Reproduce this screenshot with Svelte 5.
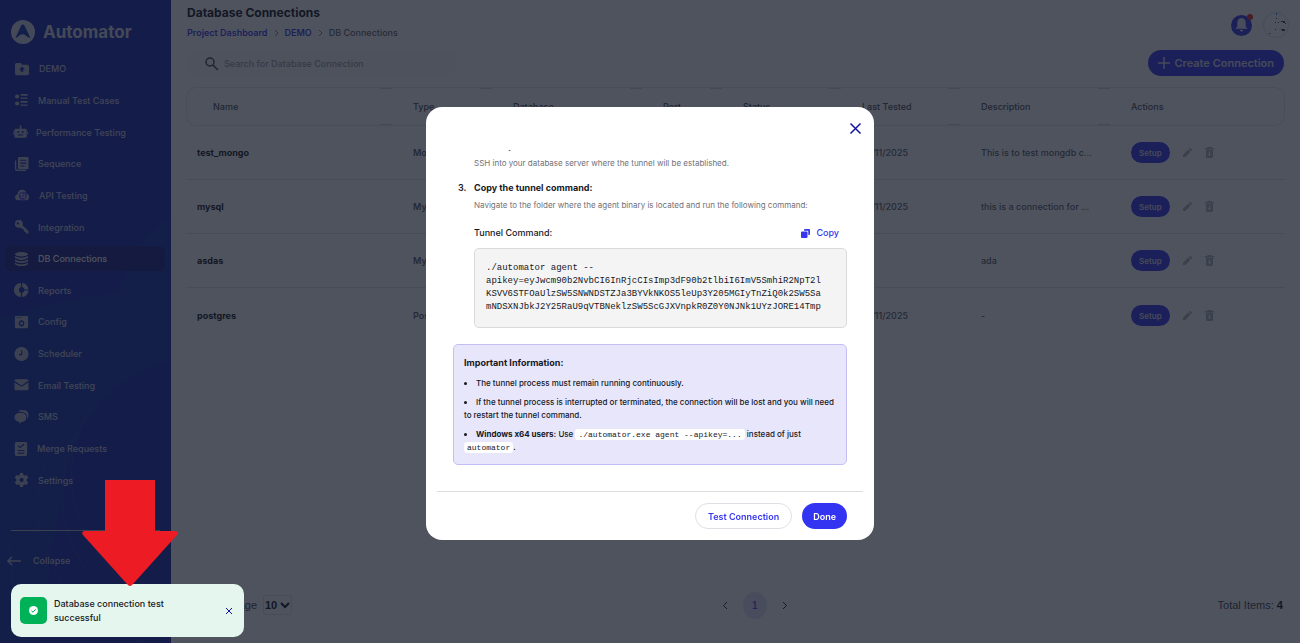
<script lang="ts">
  import { onMount } from "svelte";

  const nav = [
    { label: "DEMO", icon: "folder", w: 16 },
    { label: "Manual Test Cases", icon: "cases", w: 15 },
    { label: "Performance Testing", icon: "robot", w: 13 },
    { label: "Sequence", icon: "sequence", w: 15 },
    { label: "API Testing", icon: "cloud", w: 16 },
    { label: "Integration", icon: "key", w: 15 },
    { label: "DB Connections", icon: "db", w: 15 },
    { label: "Reports", icon: "donut", w: 15 },
    { label: "Config", icon: "config", w: 15 },
    { label: "Scheduler", icon: "clock", w: 15 },
    { label: "Email Testing", icon: "mail", w: 15 },
    { label: "SMS", icon: "chat", w: 15 },
    { label: "Merge Requests", icon: "merge", w: 14 },
    { label: "Settings", icon: "gear", w: 15 },
  ];

  const columns = ["Name", "Type", "Database", "Port", "Status", "Last Tested", "Description", "Actions"];

  const rows = [
    { name: "test_mongo", type: "MongoDB", tested: "18/11/2025", description: "This is to test mongdb c..." },
    { name: "mysql", type: "MySQL", tested: "18/11/2025", description: "this is a connection for ..." },
    { name: "asdas", type: "MySQL", tested: "", description: "ada" },
    { name: "postgres", type: "PostgreSQL", tested: "18/11/2025", description: "-" },
  ];

  const command = [
    "./automator agent --",
    "apikey=eyJwcm90b2NvbCI6InRjcCIsImp3dF90b2tlbiI6ImV5SmhiR2NpT2l",
    "KSVV6STFOaUlzSW5SNWNDSTZJa3BYVkNKOS5leUp3Y205MGIyTnZiQ0k2SW5Sa",
    "mNDSXNJbkJ2Y25RaU9qVTBNeklzSW5ScGJXVnpkR0Z0Y0NJNk1UYzJORE14Tmp",
  ].join("\n");

  let steps: HTMLDivElement;

  onMount(() => {
    steps.scrollTop = steps.scrollHeight;
  });
</script>

{#snippet navIcon(name: string)}
  {#if name === "folder"}
    <path fill-rule="evenodd" d="M2 1h4.500l1.500 2H14q2 0 2 2v8q0 2-2 2H2q-2 0-2-2V3Q0 1 2 1zM8 5 4.700 8.500h1.800V11h3V8.500h1.800z" />
  {:else if name === "cases"}
    <circle cx="3" cy="4" r="2.400" /><circle cx="3" cy="12" r="2.400" />
    <path d="M7 1h8v2H7zM7 5h8v1.500H7zM7 9h8v2H7zM7 13h8v1.500H7z" />
  {:else if name === "robot"}
    <path fill-rule="evenodd" d="M7 0h2v4h5q1.500 0 1.500 1.500v8q0 1.500-1.500 1.500H2q-1.500 0-1.500-1.500v-8Q.5 4 2 4h5zM4 7v2h2.500V7zM9.500 7v2H12V7zM4.500 11v1.200h7V11z" />
    <path d="M-1 7h1v4h-1zM16 7h1v4h-1z" />
  {:else if name === "sequence"}
    <path fill-rule="evenodd" d="M5.500 0h9Q16 0 16 1.500v11q0 1.500-1.500 1.500h-9Q4 14 4 12.500v-11Q4 0 5.500 0zM6.500 3v1.300h7V3zM6.500 6.300v1.300h7V6.300zM6.500 9.600v1.300h5V9.600z" />
    <path d="M.5 4H2v9q0 1.500 1.500 1.500H13V16H3q-2.500 0-2.500-2z" />
  {:else if name === "cloud"}
    <path d="M4 14q-4 0-4-3.500Q0 7.500 3 7q.5-5 5.500-5 4 0 4.500 4.500 3 .5 3 4Q16 14 12.500 14z" />
    <circle cx="9" cy="9" r="4.600" class="badge" />
    <path d="M7.500 6.500v5M5.800 8l1.700-1.700L9 8M10.500 6.500v5M9 10l1.500 1.700 1.700-1.700" class="line" />
  {:else if name === "key"}
    <path fill-rule="evenodd" d="M5 0q4.500 0 4.500 4.500 0 .8-.3 1.700L16 12.500V15.500h-3v-2h-2v-2.200L6.800 8.700Q.5 9.500.5 4.500.5 0 5 0zM3.800 2.500a1.300 1.300 0 1 0 .1 0z" />
  {:else if name === "db"}
    <ellipse cx="8" cy="2.500" rx="7.500" ry="2.500" />
    <path d="M.5 4.500Q3 6.500 8 6.500t7.500-2v2.200Q13 9 8 9T.5 6.700zM.5 8.300q2.500 2.200 7.500 2.200t7.500-2.200v2.200q-2.500 2-7.500 2t-7.500-2zM.5 12q2.500 2.200 7.500 2.200t7.500-2.200v1.700Q13.500 16 8 16T.5 13.700z" />
  {:else if name === "donut"}
    <path d="M7.300 0v4.500a3.800 3.800 0 0 0 0 7V16A8 8 0 0 1 7.300 0zM8.700 0A8 8 0 0 1 16 7.300h-4.500a3.800 3.800 0 0 0-2.800-2.800zM16 8.700A8 8 0 0 1 8.700 16v-4.500a3.800 3.800 0 0 0 2.800-2.800z" />
  {:else if name === "config"}
    <path fill-rule="evenodd" d="M2 1h12q1.500 0 1.500 1.500v11Q15.500 15 14 15H2Q.5 15 .5 13.500v-11Q.5 1 2 1zM2.500 2.300v1.200h1.200V2.300zM4.700 2.300v1.200h1.200V2.300zM6.900 2.300v1.200h1.200V2.300zM8 5.500l1 1h1.500V8l1.200 1.500-1.200 1.500v1.500H9L8 13.500l-1-1H5.500V11L4.300 9.500 5.500 8V6.500H7z" />
    <circle cx="8" cy="9.500" r="1.600" />
  {:else if name === "clock"}
    <path fill-rule="evenodd" d="M8 0a8 8 0 1 1-.1 0zM7.500 4v4H5v1.400h3.900V4z" />
  {:else if name === "mail"}
    <path d="M0 3V2.500Q.5 1.500 1.500 1.500h13q1 0 1.500 1V3L8 8.500z" />
    <path d="M0 5l8 5 8-5v7.500q0 1.500-1.500 1.500h-13Q0 14 0 12.500z" />
  {:else if name === "chat"}
    <path d="M7 3.200q6.500 0 6.500 5.300 0 5-6 5.200L5.500 16v-2.500Q0 12.500 0 8.500 0 3.200 7 3.200z" />
    <path d="M4 1.500Q5.500 0 9 0q7 0 7 6 0 2.500-1.500 4Q15.300 2.500 8 1.900q-2-.1-4-.4z" />
  {:else if name === "merge"}
    <path fill-rule="evenodd" d="M3 0h10q2 0 2 2v12q0 2-2 2H3q-2 0-2-2V2Q1 0 3 0zM5 3.500 4 4.500l2.700 2.700L12 3l-1-1-4.300 3.300zM4 9v1.300h8V9zM4 12v1.300h8V12z" />
  {:else if name === "gear"}
    <path fill-rule="evenodd" d="M6.300 0h3.400l.4 2.200 1.600 1 2.200-.8 1.700 2.900L13.900 7v2l1.700 1.700-1.700 2.900-2.200-.8-1.600 1-.4 2.200H6.300l-.4-2.200-1.600-1-2.200.8L.4 10.700 2.100 9V7L.4 5.300l1.700-2.900 2.200.8 1.600-1zM8 5.500a2.500 2.500 0 1 0 .1 0z" />
  {/if}
{/snippet}

<div class="app">
  <aside class="sidebar">
    <svg class="waves" viewBox="0 0 171 643" preserveAspectRatio="none" aria-hidden="true">
      <path class="wave" d="M0 318Q60 298 120 292 124 250 150 235 155 222 171 220V360Q120 375 90 415 60 460 40 643H0z" />
      <path class="thread" d="M60 428Q20 500 50 560T80 643M78 428Q45 500 80 560T140 643M95 400Q50 470 90 540T171 585M8 540Q18 590 10 643" />
    </svg>

    <div class="brand">
      <svg width="24" height="24" viewBox="0 0 24 24" aria-hidden="true">
        <circle cx="12" cy="12" r="12" fill="#d3d7e8" />
        <path d="M11.800 4.500q1.200 0 1.800 1.200L19.500 18q-3.500-.8-6.500-3.500-2.500-.8-4 .8Q7 17.500 4.500 18L10 5.700q.6-1.200 1.800-1.200z" fill="#1230b8" />
        <path d="M5.500 18q4-3.600 6.500-3.200 2.500.4 5.500 3-3.500-1-5.500-1.300T5.500 18z" fill="#d3d7e8" />
      </svg>
      <span>Automator</span>
    </div>

    <nav>
      {#each nav as item (item.label)}
        <a href="#{item.icon}" class:active={item.icon === "db"}>
          <svg width={item.w} height="14" viewBox="0 0 16 16" aria-hidden="true">{@render navIcon(item.icon)}</svg>
          <span>{item.label}</span>
        </a>
      {/each}
    </nav>

    <div class="side-foot">
      <button class="collapse">
        <svg width="14" height="10" viewBox="0 0 14 10" aria-hidden="true"><path d="M14 5H1M5 1 1 5l4 4" /></svg>
        Collapse
      </button>
    </div>
  </aside>

  <main>
    <header class="top">
      <div>
        <h1>Database Connections</h1>
        <div class="crumbs">
          <a href="#dashboard">Project Dashboard</a>
          <svg width="3" height="6" viewBox="0 0 3 6" aria-hidden="true"><path d="M0 0l3 3-3 3" /></svg>
          <a href="#demo">DEMO</a>
          <svg width="3" height="6" viewBox="0 0 3 6" aria-hidden="true"><path d="M0 0l3 3-3 3" /></svg>
          <span>DB Connections</span>
        </div>
      </div>
      <div class="account">
        <button class="bell" aria-label="Notifications">
          <svg width="13" height="14" viewBox="0 0 13 15" aria-hidden="true">
            <path d="M6.500 0Q11 .5 11 5.500V9l2 2.500H0L2 9V5.500Q2 .5 6.500 0zM4.500 12.500h4q-.5 2-2 2t-2-2z" />
          </svg>
          <i></i>
        </button>
        <button class="avatar" aria-label="Profile">
          <svg width="24" height="24" viewBox="1 1 24 24" aria-hidden="true">
            <path d="M13 1h1v2h-1z" fill="#2d7dd0" />
            <path d="M13 6h1v1h-1zM12 10h1v1h-1zM15 10h1v1h-1zM18 9h4v1h-4zM20 10h2v1h-2zM22 11h1v1h-1zM12 17h1v1h-1zM18 17h4v1h-4zM19 18h3v1h-3z" fill="#444" />
            <path d="M6 21h2v1H6z" fill="#999" />
          </svg>
        </button>
      </div>
    </header>

    <div class="toolbar">
      <label class="search">
        <svg width="13" height="13" viewBox="0 0 13 13" aria-hidden="true"><circle cx="5" cy="5" r="4" /><path d="M8 8l5 5" /></svg>
        <input type="text" placeholder="Search for Database Connection" aria-label="Search for Database Connection" />
      </label>
      <button class="create">
        <svg width="12" height="12" viewBox="0 0 12 12" aria-hidden="true"><path d="M6 0v12M0 6h12" /></svg>
        Create Connection
      </button>
    </div>

    <div class="table-wrap">
      <table>
        <colgroup>
          {#each columns as column (column)}
            <col class={column.split(" ")[0].toLowerCase()} />
          {/each}
        </colgroup>
        <thead>
          <tr>
            {#each columns as column (column)}
              <th>{column}</th>
            {/each}
          </tr>
        </thead>
        <tbody>
          {#each rows as row (row.name)}
            <tr>
              <td class="name">{row.name}</td>
              <td class="type">{row.type}</td>
              <td></td>
              <td></td>
              <td></td>
              <td>{row.tested}</td>
              <td>{row.description}</td>
              <td>
                <div class="actions">
                  <button class="setup">Setup</button>
                  <button class="plain" aria-label="Edit {row.name}">
                    <svg width="9" height="9" viewBox="0 0 10 10" aria-hidden="true"><path d="M0 10V7.500L5.800 1.700l2.500 2.500L2.500 10zM6.500 1 7.500 0H8.300L10 1.700v.8L9 3.500z" /></svg>
                  </button>
                  <button class="plain" aria-label="Delete {row.name}">
                    <svg width="9" height="11" viewBox="0 0 9 11" aria-hidden="true"><path fill-rule="evenodd" d="M2.500 0h4l.5 1h2v1.500H0V1h2zM1 3h7v6.500Q8 11 6.500 11h-4Q1 11 1 9.500zM4 4.500v2.700H2.700L4.500 9l1.800-1.800H5V4.500z" /></svg>
                  </button>
                </div>
              </td>
            </tr>
          {/each}
        </tbody>
      </table>
    </div>

    <footer>
      <label class="per-page">
        Items per page
        <span class="select">
          <select>
            <option>10</option>
            <option>20</option>
            <option>50</option>
          </select>
          <svg width="8" height="5" viewBox="0 0 8 5" aria-hidden="true"><path d="M0 0l4 4 4-4" /></svg>
        </span>
      </label>
      <div class="pager">
        <button aria-label="Previous page"><svg width="4" height="7" viewBox="0 0 4 7" aria-hidden="true"><path d="M4 0 .5 3.500 4 7" /></svg></button>
        <button class="current">1</button>
        <button aria-label="Next page"><svg width="4" height="7" viewBox="0 0 4 7" aria-hidden="true"><path d="M0 0l3.500 3.500L0 7" /></svg></button>
      </div>
      <div class="total">Total Items: <b>4</b></div>
    </footer>
  </main>
</div>

<div class="overlay">
  <div class="modal" role="dialog" aria-modal="true" aria-label="Tunnel setup">
    <div class="modal-head">
      <button aria-label="Close"><svg width="11" height="11" viewBox="0 0 11 11" aria-hidden="true"><path d="M.5.5l10 10M10.500.5l-10 10" /></svg></button>
    </div>

    <div class="steps" bind:this={steps}>
      <ol>
        <li>
          <h3>SSH step:</h3>
          <p>SSH into your database server where the tunnel will be established.</p>
        </li>
        <li>
          <h3>Copy the tunnel command:</h3>
          <p>Navigate to the folder where the agent binary is located and run the following command:</p>
          <div class="command-head">
            <span>Tunnel Command:</span>
            <button>
              <svg width="9" height="9" viewBox="0 0 9 9" aria-hidden="true"><path d="M1 2.500h5q.5 0 .5.5v5q0 1-1 1H1Q0 9 0 8V3.500q0-1 1-1zM3 1q0-1 1-1h4q1 0 1 1v4q0 1-1 1h-.7V2.500q0-.8-.8-.8H3z" /></svg>
              Copy
            </button>
          </div>
          <pre>{command}</pre>
        </li>
      </ol>

      <section class="info">
        <h3>Important Information:</h3>
        <ul>
          <li>The tunnel process must remain running continuously.</li>
          <li>If the tunnel process is interrupted or terminated, the connection will be lost and you will need to restart the tunnel command.</li>
          <li><b>Windows x64 users:</b> Use <code>./automator.exe agent --apikey=...</code> instead of just <code>automator</code>.</li>
        </ul>
      </section>
    </div>

    <div class="modal-foot">
      <button class="outline">Test Connection</button>
      <button class="primary">Done</button>
    </div>
  </div>
</div>

<div class="toast" role="status">
  <span class="ok">
    <svg width="9" height="9" viewBox="0 0 9 9" aria-hidden="true"><circle cx="4.500" cy="4.500" r="4.500" fill="#fff" /><path d="M2.400 4.700 4 6.200 6.700 3.200" fill="none" stroke="#00b257" /></svg>
  </span>
  <p>Database connection test successful</p>
  <button aria-label="Dismiss"><svg width="6" height="6" viewBox="0 0 6 6" aria-hidden="true"><path d="M0 0l6 6M6 0 0 6" /></svg></button>
  <svg class="pointer" width="98" height="107" viewBox="0 0 98 107" aria-hidden="true"><path d="M24 0h50v51h21q3 2 1 4L52 104q-3 4-6 0L2 55q-2-3 1-4h21z" /></svg>
</div>

<style>
  :global(body) {
    margin: 0;
    font-family: Inter, "Liberation Sans", sans-serif;
    font-size: 9px;
    font-weight: 500;
    color: #0c1020;
    background: #fff;
  }
  button {
    font: inherit;
    color: inherit;
    background: none;
    border: none;
    padding: 0;
    cursor: pointer;
  }
  a {
    color: inherit;
    text-decoration: none;
  }
  h1,
  h3,
  p {
    margin: 0;
  }
  svg {
    flex: none;
    overflow: visible;
  }
  .app {
    display: flex;
    min-height: 100vh;
  }

  /* sidebar */
  .sidebar {
    position: relative;
    box-sizing: border-box;
    flex: none;
    width: 171px;
    height: 100vh;
    display: flex;
    flex-direction: column;
    background: #1624b2;
    color: #c4c8de;
  }
  .waves {
    position: absolute;
    inset: 0;
    width: 100%;
    height: 100%;
  }
  .wave {
    fill: #1630b0;
  }
  .thread {
    fill: none;
    stroke: #2036b4;
  }
  .brand {
    position: relative;
    display: flex;
    align-items: center;
    gap: 8px;
    height: 34px;
    padding: 15px 0 4px 11px;
    font-size: 17px;
    font-weight: 700;
    color: #d3d7e8;
  }
  nav {
    position: relative;
    flex: 1;
    display: flex;
    flex-direction: column;
  }
  nav a {
    flex: 1;
    display: flex;
    align-items: center;
    gap: 9px;
    margin: 3px 6px 3px 5px;
    padding-left: 9px;
    border-radius: 6px;
  }
  nav a svg {
    fill: #b4b9d4;
  }
  nav .badge {
    fill: #5a4ee0;
  }
  nav .line {
    fill: none;
    stroke: #c4c8de;
  }
  nav .active {
    background: #141e8c;
    color: #fff;
  }
  .side-foot {
    position: relative;
    height: 112px;
    margin: 34px 11px 0;
    border-top: 1px solid #b4b9d4;
  }
  .collapse {
    display: flex;
    align-items: center;
    gap: 12px;
    margin: 24px 0 0 -4px;
  }
  .collapse svg {
    fill: none;
    stroke: #b4b9d4;
    stroke-width: 1.500;
  }

  /* page */
  main {
    flex: 1;
    min-width: 0;
    display: flex;
    flex-direction: column;
    padding: 0 15px;
  }
  .top {
    display: flex;
    justify-content: space-between;
    height: 50px;
  }
  h1 {
    margin: 5px 0 4px 1px;
    font-size: 12px;
    line-height: 16px;
    font-weight: 700;
  }
  .crumbs {
    display: flex;
    align-items: center;
    gap: 7px;
    margin-left: 1px;
    line-height: 16px;
    color: #5a5f70;
  }
  .crumbs a {
    color: #3636ef;
    font-weight: 600;
  }
  .crumbs svg {
    fill: none;
    stroke: #7a7f8e;
  }
  .account {
    display: flex;
    align-items: center;
    gap: 11px;
    margin-right: -4px;
  }
  .bell {
    position: relative;
    display: grid;
    place-items: center;
    width: 21px;
    height: 21px;
    border-radius: 50%;
    background: #3636ef;
    fill: #e4e4f8;
  }
  .bell i {
    position: absolute;
    top: -1px;
    right: -1px;
    width: 6px;
    height: 6px;
    border-radius: 50%;
    background: #e02828;
  }
  .avatar {
    width: 26px;
    height: 26px;
    box-sizing: border-box;
    border: 1px solid #dcdee6;
    border-radius: 50%;
  }
  .avatar svg {
    display: block;
  }
  .toolbar {
    display: flex;
    justify-content: space-between;
    height: 26px;
    margin: 0 1px 11px;
  }
  .search {
    display: flex;
    align-items: center;
    gap: 6px;
    width: 270px;
    padding-left: 18px;
    box-sizing: border-box;
    border-radius: 13px;
    background: #fbfbfb;
  }
  .search svg {
    fill: none;
    stroke: #444;
    stroke-width: 1.500;
  }
  .search input {
    flex: 1;
    border: none;
    outline: none;
    background: none;
    padding: 0;
    font: inherit;
  }
  .search input::placeholder {
    color: #9a9ca6;
  }
  .create {
    display: flex;
    align-items: center;
    gap: 4px;
    padding: 0 10px;
    border-radius: 13px;
    background: #3333f2;
    color: #d8d8ea;
    font-size: 11px;
    font-weight: 600;
  }
  .create svg {
    stroke: #d8d8ea;
    stroke-width: 1.500;
  }

  /* table */
  .table-wrap {
    flex: 1;
  }
  table {
    width: 100%;
    table-layout: fixed;
    border-collapse: separate;
    border-spacing: 0;
  }
  col.name {
    width: 200px;
  }
  col.type {
    width: 100px;
  }
  col.database,
  col.description {
    width: 150px;
  }
  col.port {
    width: 80px;
  }
  col.status,
  col.last {
    width: 119px;
  }
  th {
    position: relative;
    height: 37px;
    padding: 0 0 0 27px;
    border: 1px solid #e6e8ee;
    border-width: 1px 0;
    text-align: left;
    font-weight: 500;
    color: #4a4d58;
  }
  th:first-child {
    padding-left: 26px;
    border-left-width: 1px;
    border-radius: 10px 0 0 10px;
  }
  th:last-child {
    border-right-width: 1px;
    border-radius: 0 10px 10px 0;
  }
  th:not(:first-child)::before,
  th:not(:first-child)::after {
    content: "";
    position: absolute;
    left: -6px;
    width: 12px;
    height: 1px;
    background: #d4d7e0;
  }
  th::before {
    top: 0;
  }
  th::after {
    bottom: 0;
  }
  td {
    height: 53px;
    padding: 0 0 0 27px;
    border-bottom: 1px solid #e0e2ea;
    color: #555a6a;
    white-space: nowrap;
  }
  tr:last-child td {
    height: 55px;
    border-bottom: none;
  }
  td.name {
    padding-left: 11px;
    font-weight: 700;
    color: #0c1020;
  }
  td.type {
    font-weight: 600;
  }
  .actions {
    display: flex;
    align-items: center;
    gap: 13px;
  }
  .setup {
    height: 21px;
    padding: 0 8px;
    border-radius: 11px;
    background: #3333f2;
    color: #d8d8ea;
    font-size: 8px;
    font-weight: 600;
  }
  .plain svg {
    display: block;
    fill: #b0b2be;
  }

  /* footer */
  footer {
    display: flex;
    align-items: center;
    justify-content: space-between;
    height: 76px;
    padding: 0 2px 0 1px;
    font-family: "Liberation Sans", sans-serif;
    font-size: 11px;
    color: #3a3f50;
  }
  .per-page {
    display: flex;
    align-items: center;
    gap: 6px;
    width: 105px;
    justify-content: flex-end;
    white-space: nowrap;
  }
  .select {
    position: relative;
  }
  select {
    appearance: none;
    box-sizing: border-box;
    width: 29px;
    height: 20px;
    padding: 0 0 0 1px;
    border: 1px solid #e4e4ec;
    border-radius: 3px;
    background: none;
    font: inherit;
    font-weight: 700;
    color: #0c1020;
  }
  .select svg {
    position: absolute;
    right: 3px;
    top: 8px;
    fill: none;
    stroke: #0c1020;
    stroke-width: 2;
    pointer-events: none;
  }
  .pager {
    display: flex;
    align-items: center;
    gap: 16px;
  }
  .pager svg {
    display: block;
    fill: none;
    stroke: #222;
  }
  .current {
    width: 24px;
    height: 27px;
    border-radius: 50%;
    background: #e4e4fb;
    color: #3333f2;
  }
  .total b {
    font-weight: 700;
    color: #0c1020;
  }

  /* modal */
  .overlay {
    position: fixed;
    inset: 0;
    display: flex;
    align-items: center;
    justify-content: center;
    padding-top: 4px;
    background: rgba(20, 26, 39, 0.75);
  }
  .modal {
    box-sizing: border-box;
    display: flex;
    flex-direction: column;
    width: 448px;
    max-height: calc(100vh - 210px);
    padding: 0 11px;
    border-radius: 16px;
    background: #fff;
    color: #16181f;
  }
  .modal-head {
    flex: none;
    display: flex;
    justify-content: flex-end;
    height: 27px;
    padding: 16px 2px 0 0;
  }
  .modal-head button {
    align-self: flex-start;
  }
  .modal-head svg {
    display: block;
    stroke: #1414a0;
    stroke-width: 1.500;
  }
  .steps {
    flex: 1;
    overflow-y: auto;
    scrollbar-width: none;
    padding: 0 16px 26px;
  }
  ol {
    margin: 0;
    padding: 0 0 0 21px;
    list-style: none;
    counter-reset: step 1;
    line-height: 16px;
  }
  ol li {
    position: relative;
    counter-increment: step;
  }
  ol li::before {
    content: counter(step) ".";
    position: absolute;
    left: -16px;
    font-weight: 600;
  }
  ol li + li {
    margin-top: 10px;
  }
  .steps h3 {
    font-size: 9px;
    line-height: 16px;
    font-weight: 700;
  }
  ol p {
    margin-top: 2px;
    font-size: 8px;
    line-height: 14px;
    font-weight: 400;
    color: #6f7178;
  }
  .command-head {
    display: flex;
    justify-content: space-between;
    margin: 13px 8px 7px 0;
  }
  .command-head button {
    display: flex;
    align-items: center;
    gap: 6px;
    color: #3636ef;
    fill: #3636ef;
  }
  pre {
    margin: 0;
    padding: 13px 11px;
    border: 1px solid #dadada;
    border-radius: 5px;
    background: #f4f4f4;
    font-family: "Liberation Mono", monospace;
    font-size: 9px;
    line-height: 13px;
    font-weight: 400;
    overflow: hidden;
  }
  .info {
    margin-top: 16px;
    padding: 10px;
    border: 1px solid #c2bff7;
    border-radius: 5px;
    background: #e7e6fb;
  }
  ul {
    margin: 6px 0 0;
    padding: 0;
    list-style-position: inside;
    font-size: 8px;
    line-height: 13px;
  }
  ul li + li {
    margin-top: 6px;
  }
  code {
    padding: 1px 3px;
    border-radius: 3px;
    background: #fff;
    font-family: "Liberation Mono", monospace;
    font-size: 8px;
    font-weight: 400;
  }
  .modal-foot {
    flex: none;
    display: flex;
    justify-content: flex-end;
    gap: 10px;
    padding: 11px 16px;
    border-top: 1px solid #dedede;
    font-weight: 600;
  }
  .modal-foot button {
    box-sizing: border-box;
    height: 26px;
    padding: 0 11px;
    border-radius: 13px;
  }
  .modal-foot .outline {
    padding: 0 12px;
    border: 1px solid #dedfe4;
    color: #3636ef;
  }
  .primary {
    background: #3333f2;
    color: #fff;
  }

  /* toast */
  .toast {
    position: fixed;
    left: 11px;
    bottom: 6px;
    box-sizing: border-box;
    display: flex;
    align-items: center;
    gap: 7px;
    width: 233px;
    height: 53px;
    padding: 0 12px 0 9px;
    border-radius: 10px;
    background: #e5f6ee;
    color: #16181f;
  }
  .ok {
    flex: none;
    display: grid;
    place-items: center;
    width: 27px;
    height: 27px;
    border-radius: 5px;
    background: #00b257;
  }
  .toast p {
    width: 130px;
    margin-right: auto;
    line-height: 14px;
  }
  .toast button svg {
    display: block;
    stroke: #1414a0;
  }
  .pointer {
    position: absolute;
    left: 70px;
    bottom: 50px;
    fill: #ed1c24;
  }
</style>
